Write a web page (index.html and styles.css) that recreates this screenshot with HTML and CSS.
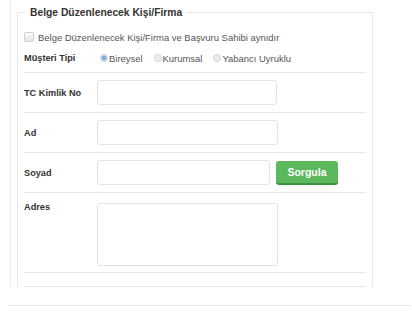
FILE: index.html
```html
<!DOCTYPE html>
<html lang="tr">
<head>
<meta charset="utf-8">
<link rel="stylesheet" href="styles.css">
</head>
<body>
<div class="page">
  <div class="panel">
    <fieldset class="box">
      <legend class="legend">Belge Düzenlenecek Kişi/Firma</legend>
      <div class="row row-check">
        <span class="checkbox"></span>
        <span class="check-text">Belge Düzenlenecek Kişi/Firma ve Başvuru Sahibi aynıdır</span>
      </div>
      <div class="row row-type">
        <span class="label">Müşteri Tipi</span>
        <div class="radios">
          <span class="radio-item"><span class="radio checked"></span>Bireysel</span>
          <span class="radio-item"><span class="radio"></span>Kurumsal</span>
          <span class="radio-item"><span class="radio"></span>Yabancı Uyruklu</span>
        </div>
      </div>
      <div class="row row-field">
        <span class="label">TC Kimlik No</span>
        <span class="input w180"></span>
      </div>
      <div class="row row-field">
        <span class="label">Ad</span>
        <span class="input w181"></span>
      </div>
      <div class="row row-field">
        <span class="label">Soyad</span>
        <span class="input w173"></span>
        <span class="button">Sorgula</span>
      </div>
      <div class="row row-area">
        <span class="label">Adres</span>
        <span class="textarea"></span>
      </div>
      <div class="row row-end"></div>
    </fieldset>
  </div>
</div>
</body>
</html>
```

FILE: styles.css
```css
html, body {
  margin: 0;
  padding: 0;
  background: #ffffff;
}
body {
  font-family: "Liberation Sans", Arial, sans-serif;
  color: #333;
}
.page {
  margin-left: 8px;
  width: 402px;
  border-bottom: 1px solid #e8e8e8;
  padding-bottom: 18px;
}
.panel {
  margin-left: 2px;
  border-left: 1px solid #ececec;
  padding-top: 6px;
}
.box {
  margin: 0 0 0 6px;
  width: 356px;
  box-sizing: border-box;
  padding: 0 6px;
  border: 1px solid #e6e6e6;
  border-bottom: none;
}
.legend {
  font-size: 10.3px;
  line-height: 13px;
  font-weight: bold;
  color: #333;
  padding: 0 4px;
  margin-left: 2px;
}
.row {
  display: flex;
  align-items: center;
  border-bottom: 1px solid #e8e8e8;
}
.row-check {
  border-bottom: none;
  padding-top: 11px;
  height: 14px;
}
.checkbox {
  width: 8px;
  height: 8px;
  border: 1px solid #cfcfcf;
  border-radius: 2px;
  background: linear-gradient(#fbfbfb, #e6e6e6);
  margin-right: 4px;
}
.check-text {
  font-size: 9.45px;
  color: #555;
}
.row-type {
  height: 28px;
}
.label {
  width: 73px;
  flex: none;
  font-size: 9.2px;
  font-weight: bold;
  color: #333;
}
.radios {
  display: flex;
  gap: 11px;
  margin-left: 3px;
  font-size: 9.45px;
  color: #555;
}
.radio-item {
  display: flex;
  align-items: center;
}
.radio {
  width: 6px;
  height: 6px;
  border-radius: 50%;
  border: 1px solid #d6d6d6;
  background: #ececec;
  margin-right: 1px;
}
.radio.checked {
  background: radial-gradient(circle, #7fb0e0 0, #7fb0e0 2px, #dfe8f2 3px);
  border-color: #c9d5e2;
}
.row-field {
  height: 39px;
}
.input {
  height: 23px;
  border: 1px solid #e3e3e3;
  border-radius: 3px;
  background: #fff;
}
.w180 { width: 178px; }
.w181 { width: 179px; }
.w173 { width: 171px; }
.button {
  margin-left: 6px;
  width: 62px;
  height: 24px;
  box-sizing: border-box;
  background: #5cb85c;
  border-bottom: 2px solid #3e8f3e;
  border-radius: 3px;
  color: #fff;
  font-size: 10.5px;
  font-weight: bold;
  display: flex;
  align-items: center;
  justify-content: center;
}
.row-area {
  align-items: flex-start;
  height: 79px;
  padding-top: 0;
}
.row-area .label {
  margin-top: 9px;
}
.textarea {
  margin-top: 10px;
  width: 179px;
  height: 61px;
  border: 1px solid #e3e3e3;
  border-radius: 3px;
}
.row-end {
  height: 13px;
}
```
